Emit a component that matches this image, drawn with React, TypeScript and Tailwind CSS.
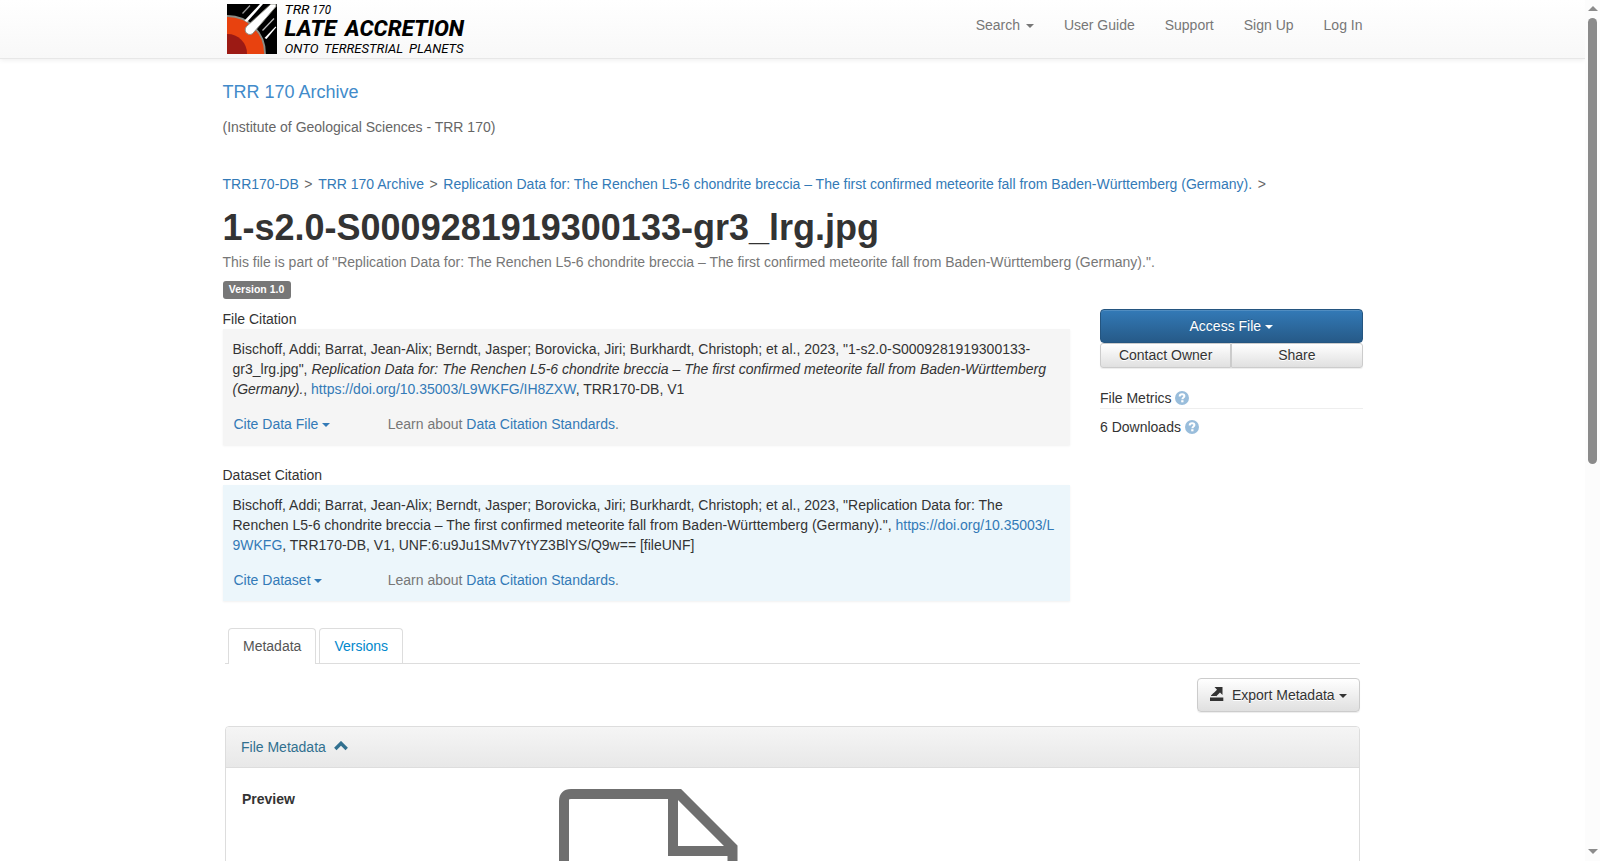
import type { ReactNode } from "react";
import clsx from "clsx";

const DATASET =
  "Replication Data for: The Renchen L5-6 chondrite breccia – The first confirmed meteorite fall from Baden-Württemberg (Germany).";
const AUTHORS =
  "Bischoff, Addi; Barrat, Jean-Alix; Berndt, Jasper; Borovicka, Jiri; Burkhardt, Christoph; et al., 2023,";

const Caret = ({ className }: { className?: string }) => (
  <span
    className={clsx(
      "inline-block h-0 w-0 border-x-4 border-t-4 border-x-transparent border-t-current align-middle",
      className
    )}
  />
);

const Link = ({ children }: { children: ReactNode }) => (
  <a href="#" className="text-[#337ab7]">
    {children}
  </a>
);

const HelpIcon = () => (
  <svg viewBox="0 0 14 14" className="inline-block h-3.5 w-3.5 align-[-1.500px]">
    <circle cx="7" cy="7" r="7" fill="#99bddb" />
    <path
      d="M4.700 5.500C4.700 3.900 5.700 3.200 7.100 3.200s2.300.7 2.300 1.900c0 1.500-2 1.500-2 3.200"
      fill="none"
      stroke="#fff"
      strokeWidth="2"
    />
    <rect x="6.200" y="9.200" width="2.300" height="2.100" fill="#fff" />
  </svg>
);

// each word is fitted to its own width: [text, x, width]
const topLine: [string, number, number][] = [
  ["TRR", 57.5, 25],
  ["170", 85, 19],
];
const middleLine: [string, number, number][] = [
  ["LATE", 57.5, 52],
  ["ACCRETION", 118, 119],
];
const bottomLine: [string, number, number][] = [
  ["ONTO", 57.5, 34],
  ["TERRESTRIAL", 97, 79],
  ["PLANETS", 182, 54.5],
];

const Words = ({ words, y }: { words: [string, number, number][]; y: number }) => (
  <>
    {words.map(([word, x, width]) => (
      <text key={word} x={x} y={y} textLength={width} lengthAdjust="spacingAndGlyphs">
        {word}
      </text>
    ))}
  </>
);

const Logo = () => (
  <svg width="260" height="58" viewBox="0 0 260 58" className="block overflow-visible">
    <defs>
      <clipPath id="tile">
        <rect x="0" y="4" width="50" height="50" />
      </clipPath>
    </defs>
    <g clipPath="url(#tile)">
      <rect y="4" width="50" height="50" fill="#000" />
      <circle cx="0.500" cy="53.500" r="37.500" fill="#e8420f" stroke="#8c8c84" strokeWidth="1.800" />
      <circle cx="0.500" cy="53.500" r="19.500" fill="#9c1a14" />
      <path
        d="M19.500 26.500L44 4h5v2.500L27 32a4.700 4.700 0 1 1-7.500-5.500z"
        fill="#fff"
        stroke="#8c8c84"
        strokeWidth="1"
      />
      <path d="M17.500 20.500L33 4h3L20 22z" fill="#fff" />
      <path d="M15.500 13.500L23 5.500" stroke="#999" strokeWidth="1.200" />
      <path d="M35.500 30.500L47 18.500" stroke="#bbb" strokeWidth="1.200" />
      <path d="M37.500 38l11-11.500.8.800L39.500 39z" fill="#fff" />
    </g>
    <g fontFamily="Roboto, sans-serif" fontStyle="italic" fill="#000">
      <g fontSize="13">
        <Words words={topLine} y={13.5} />
      </g>
      <g fontSize="22.500" fontWeight="800">
        <Words words={middleLine} y={36.3} />
      </g>
      <g fontSize="13.500">
        <Words words={bottomLine} y={53.4} />
      </g>
    </g>
  </svg>
);

const Navbar = () => (
  <header className="h-[59px] border-b border-[#e7e7e7] bg-linear-to-b from-white to-[#f8f8f8] shadow-[0_1px_5px_rgba(0,0,0,0.075)]">
    <div className="mx-auto flex w-[1140px] justify-between">
      <div className="pl-[4.500px]">
        <Logo />
      </div>
      <nav className="flex gap-[30px] pt-[15px] text-[#777]">
        <a href="#">
          Search <Caret className="ml-0.5" />
        </a>
        <a href="#">User Guide</a>
        <a href="#">Support</a>
        <a href="#">Sign Up</a>
        <a href="#">Log In</a>
      </nav>
    </div>
  </header>
);

type CitationProps = {
  label: string;
  action: string;
  tone: string;
  children: ReactNode;
};

const Citation = ({ label, action, tone, children }: CitationProps) => (
  <section className="mb-5">
    <div>{label}</div>
    <div className={clsx("h-[116px] px-2.5 pt-2.5 shadow-[0_1px_2px_rgba(0,0,0,0.06)]", tone)}>
      <div className="h-[60px] break-all">{children}</div>
      <div className="mt-[15px] flex">
        <a href="#" className="w-[155.2px] pl-px text-[#337ab7]">
          {action} <Caret />
        </a>
        <span className="text-[#777]">
          Learn about <Link>Data Citation Standards</Link>.
        </span>
      </div>
    </div>
  </section>
);

const grayButton =
  "border border-[#ccc] bg-linear-to-b from-white to-[#e0e0e0] shadow-[inset_0_1px_0_rgba(255,255,255,0.15),0_1px_1px_rgba(0,0,0,0.075)] [text-shadow:0_1px_0_#fff]";

const Sidebar = () => (
  <aside className="w-[262.5px]">
    <button className="block h-[34px] w-full rounded border border-[#245580] bg-linear-to-b from-[#337ab7] to-[#265a88] text-white shadow-[inset_0_1px_0_rgba(255,255,255,0.15)] [text-shadow:0_-1px_0_rgba(0,0,0,0.2)]">
      Access File <Caret />
    </button>
    <div className="flex h-[25px] leading-[21px]">
      <button className={clsx("flex-1 rounded-l-[3px] pb-px", grayButton)}>Contact Owner</button>
      <button className={clsx("flex-1 rounded-r-[3px] pb-px", grayButton)}>Share</button>
    </div>
    <div className="mt-5 border-b border-[#eee]">
      File Metrics <HelpIcon />
    </div>
    <div className="mt-2">
      6 Downloads <HelpIcon />
    </div>
  </aside>
);

const Metadata = () => (
  <div className="mt-[7px] mr-[3px] ml-[2.500px]">
    <div className="flex h-9 gap-[3px] border-b border-[#ddd] pl-[3px]">
      <a href="#" className="-mb-px h-9 rounded-t border border-b-0 border-[#ddd] bg-white px-3.5 pt-[7px] text-[#555]">
        Metadata
      </a>
      <a href="#" className="h-[35px] rounded-t border border-b-0 border-[#ddd] px-3.5 pt-[7px] text-[#0088cc]">
        Versions
      </a>
    </div>
    <div className="mt-3.5 flex justify-end">
      <button className={clsx("flex h-[34px] items-center rounded px-3", grayButton)}>
        <svg width="14" height="14" viewBox="0 0 14 14" className="mr-[8px] -mt-[3px]" fill="#333">
          <path d="M4.500 0H12.500V8L10 5.600 6.200 9.200 3.200 6.500 7 2.800z" />
          <path d="M1 8.500L3.500 6l3 3H1z" />
          <rect y="10.500" width="13.300" height="3.500" />
        </svg>
        <span>
          Export Metadata <Caret />
        </span>
      </button>
    </div>
    <div className="mt-3.5 h-[200px] rounded-t border border-[#ddd]">
      <div className="flex h-[41px] items-center rounded-t-[3px] border-b border-[#ddd] bg-linear-to-b from-[#f5f5f5] to-[#e8e8e8] pl-[15px] text-[#31708f]">
        File Metadata
        <svg width="14" height="10" viewBox="0 0 14 10" className="ml-2 -mt-0.5">
          <path d="M1.300 8L7 2.300 12.700 8" fill="none" stroke="#31708f" strokeWidth="3.400" />
        </svg>
      </div>
      <div className="flex pl-4 pt-[21px]">
        <b className="w-[317px]">Preview</b>
        <svg width="180" height="110" viewBox="0 0 180 110" fill="none" stroke="#6f6f6f" strokeWidth="10">
          <path d="M5 110V12Q5 5 12 5H120L173.500 58.500V110" />
          <path d="M114 5V62H173" />
        </svg>
      </div>
    </div>
  </div>
);

const Scrollbar = () => (
  <div className="flex h-full w-[15px] flex-col items-center bg-[#fcfcfc]">
    <span className="mt-1.5 h-0 w-0 border-x-[5px] border-b-[5px] border-x-transparent border-b-[#8b8b8b]" />
    <div className="mt-[7px] h-[446px] w-[9px] rounded-full bg-[#8b8b8b]" />
    <span className="mb-[7px] mt-auto h-0 w-0 border-x-[5px] border-t-[5px] border-x-transparent border-t-[#8b8b8b]" />
  </div>
);

export default function App() {
  return (
    <div className="flex h-[861px] overflow-hidden bg-white font-['Liberation_Sans',Arial,sans-serif] text-sm leading-5 text-[#333]">
      <div className="w-[1585px]">
        <Navbar />
        <main className="mx-auto w-[1140px]">
          <h2 className="pt-[23px] text-lg leading-5 text-[#428bca]">TRR 170 Archive</h2>
          <p className="mt-[15px] text-[#666]">(Institute of Geological Sciences - TRR 170)</p>
          <div className="mt-[37px] flex gap-[5.600px] whitespace-pre text-[#666]">
            <Link>TRR170-DB</Link>
            <span>&gt;</span>
            <Link>TRR 170 Archive</Link>
            <span>&gt;</span>
            <Link>{DATASET}</Link>
            <span>&gt;</span>
          </div>
          <h1 className="mt-[14px] text-4xl leading-10 font-bold">1-s2.0-S0009281919300133-gr3_lrg.jpg</h1>
          <p className="mt-1 text-[#777]">This file is part of "{DATASET}".</p>
          <div className="mt-[9px] flex">
            <span className="h-[18px] rounded-[3px] bg-[#777] px-[6.300px] text-[10.5px] leading-[17px] font-bold text-white">
              Version 1.0
            </span>
          </div>
          <div className="mt-2.5 flex justify-between">
            <div className="w-[847.5px]">
              <Citation label="File Citation" action="Cite Data File" tone="bg-[#f5f5f5]">
                {AUTHORS} "1-s2.0-S0009281919300133-
                <br />
                gr3_lrg.jpg", <i className="break-normal">{DATASET}</i>,{" "}
                <Link>https://doi.org/10.35003/L9WKFG/IH8ZXW</Link>, TRR170-DB, V1
              </Citation>
              <Citation label="Dataset Citation" action="Cite Dataset" tone="bg-[#ecf6fb]">
                {AUTHORS} "Replication Data for: The
                <br />
                Renchen L5-6 chondrite breccia – The first confirmed meteorite fall from Baden-Württemberg (Germany).",{" "}
                <Link>https://doi.org/10.35003/L9WKFG</Link>, TRR170-DB, V1, UNF:6:u9Ju1SMv7YtYZ3BlYS/Q9w== [fileUNF]
              </Citation>
            </div>
            <Sidebar />
          </div>
          <Metadata />
        </main>
      </div>
      <Scrollbar />
    </div>
  );
}
